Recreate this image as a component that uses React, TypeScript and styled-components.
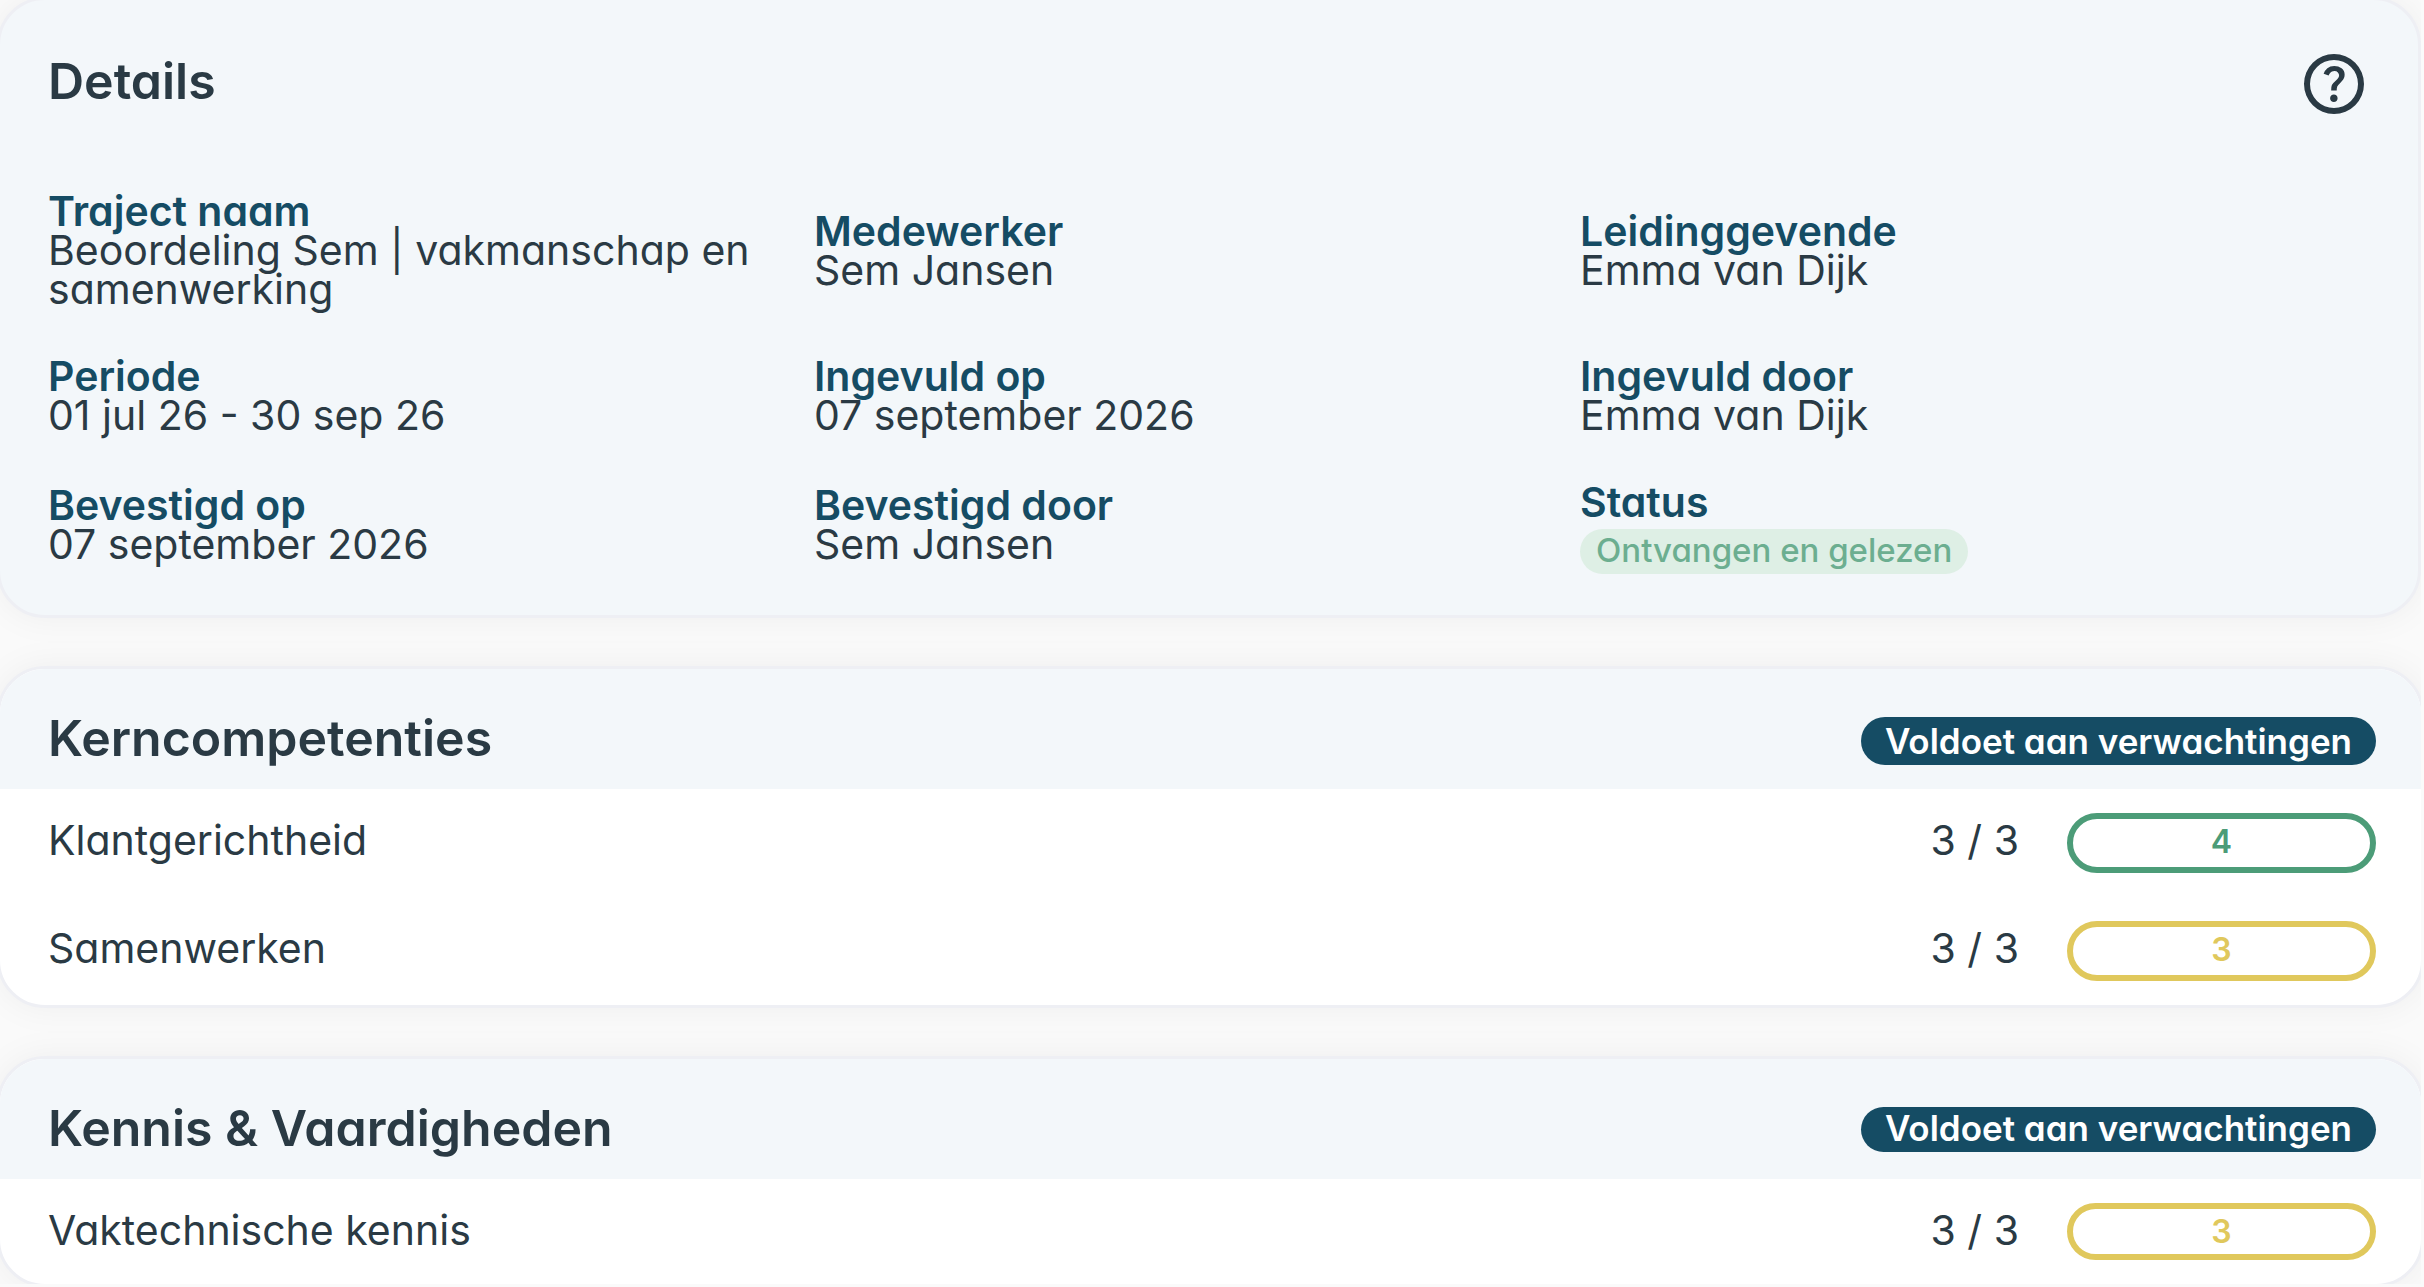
import React from "react";
import styled, { createGlobalStyle } from "styled-components";

const color = {
  page: "#fafafa",
  panel: "#f3f7fa",
  line: "#eeeff4",
  ink: "#2a3a44",
  brand: "#154c64",
  green: "#4c9c78",
  yellow: "#e0c85c",
  mint: "#deefe5",
  mintInk: "#6cae90",
};

const GlobalStyle = createGlobalStyle`
  *, *::before, *::after { box-sizing: border-box; }
  body {
    margin: 0;
    background: ${color.page};
    color: ${color.ink};
    font-family: Inter, "Open Sans", sans-serif;
    font-feature-settings: "cv11";
    font-size: 41px;
    font-weight: 400;
    line-height: 54px;
  }
`;

const Viewport = styled.div`
  overflow: hidden;
  margin-right: 3px;
`;

const Page = styled.main`
  display: flex;
  flex-direction: column;
  gap: 48px;
  margin: -3px;
`;

const Card = styled.section`
  overflow: hidden;
  border: 3px solid ${color.line};
  border-radius: 48px;
  background: #fff;
  box-shadow: 0 0 36px rgba(0, 0, 0, 0.05);
`;

const DetailsCard = styled(Card)`
  display: flex;
  flex-direction: column;
  gap: 72px;
  margin-right: 3px;
  padding: 48px;
  background: ${color.panel};
`;

const DetailsHeader = styled.header`
  display: flex;
  align-items: center;
  justify-content: space-between;
`;

const Title = styled.h2`
  margin: 0;
  padding-bottom: 6px;
  font-size: 50px;
  font-weight: 600;
  line-height: 42px;
`;

const HelpButton = styled.button`
  display: flex;
  padding: 0;
  border: 0;
  background: none;
  color: inherit;
  cursor: pointer;

  svg {
    width: 72px;
    height: 72px;
    fill: currentColor;
  }
`;

const DetailsGrid = styled.dl`
  display: grid;
  grid-template-columns: repeat(3, minmax(0, 1fr));
  gap: 48px;
  align-items: center;
  margin: 0;
  padding-right: 72px;
  line-height: 39px;
`;

const Term = styled.dt`
  color: ${color.brand};
  font-weight: 600;
`;

const Value = styled.dd`
  margin: 0;
`;

const StatusValue = styled(Value)`
  display: flex;
  margin: 7px 0 -7px;
`;

const StatusPill = styled.span`
  padding: 2px 16px 4px;
  border-radius: 24px;
  background: ${color.mint};
  color: ${color.mintInk};
  font-size: 33px;
  font-weight: 500;
`;

const GroupHeader = styled.header`
  display: flex;
  align-items: flex-start;
  justify-content: space-between;
  gap: 48px;
  height: 120px;
  padding: 48px 45px 24px 48px;
  background: ${color.panel};
`;

const Badge = styled.span<{ $compact?: boolean }>`
  padding: ${(p) => (p.$compact ? "0 24px 3px" : "3px 24px")};
  border-radius: 24px;
  background: ${color.brand};
  color: #fff;
  font-size: 35px;
  font-weight: 600;
  line-height: 42px;
`;

const Rows = styled.ul`
  margin: 0;
  padding: 0;
  list-style: none;
`;

const Row = styled.li`
  display: flex;
  align-items: flex-start;
  gap: 48px;
  padding: 24px 45px 24px 48px;
`;

const RowName = styled.span`
  flex: 1;
`;

const Rating = styled.span<{ $tone: "green" | "yellow"; $compact?: boolean }>`
  width: 309px;
  padding-bottom: ${(p) => (p.$compact ? 0 : 3)}px;
  border: 6px solid ${(p) => color[p.$tone]};
  border-radius: 30px;
  color: ${(p) => color[p.$tone]};
  font-size: 32px;
  font-weight: 600;
  line-height: 45px;
  text-align: center;
`;

const details: [string, string][] = [
  ["Traject naam", "Beoordeling Sem | vakmanschap en samenwerking"],
  ["Medewerker", "Sem Jansen"],
  ["Leidinggevende", "Emma van Dijk"],
  ["Periode", "01 jul 26 - 30 sep 26"],
  ["Ingevuld op", "07 september 2026"],
  ["Ingevuld door", "Emma van Dijk"],
  ["Bevestigd op", "07 september 2026"],
  ["Bevestigd door", "Sem Jansen"],
];

type Item = { name: string; progress: string; score: number; tone: "green" | "yellow" };
type Group = { title: string; verdict: string; compact?: boolean; items: Item[] };

const groups: Group[] = [
  {
    title: "Kerncompetenties",
    verdict: "Voldoet aan verwachtingen",
    items: [
      { name: "Klantgerichtheid", progress: "3 / 3", score: 4, tone: "green" },
      { name: "Samenwerken", progress: "3 / 3", score: 3, tone: "yellow" },
    ],
  },
  {
    title: "Kennis & Vaardigheden",
    verdict: "Voldoet aan verwachtingen",
    compact: true,
    items: [{ name: "Vaktechnische kennis", progress: "3 / 3", score: 3, tone: "yellow" }],
  },
];

const HelpIcon = () => (
  <svg viewBox="0 0 24 24" aria-hidden="true">
    <path d="M11.95 18q.525 0 .888-.363.362-.362.362-.887 0-.525-.362-.888-.363-.362-.888-.362-.525 0-.887.362-.363.363-.363.888 0 .525.363.887.362.363.887.363Zm-.9-3.85h1.85q0-.825.188-1.3.187-.475 1.062-1.3.65-.65 1.025-1.238.375-.587.375-1.412 0-1.4-1.025-2.15Q13.5 6 12.1 6q-1.425 0-2.312.75-.888.75-1.238 1.8l1.65.65q.125-.45.563-.975Q11.2 7.7 12.1 7.7q.8 0 1.2.437.4.438.4.963 0 .5-.3.937-.3.438-.75.813-1.1.975-1.35 1.475-.25.5-.25 1.825Z" />
    <path
      fillRule="evenodd"
      d="M12 2a10 10 0 1 0 0 20 10 10 0 0 0 0-20Zm0 2a8 8 0 1 1 0 16 8 8 0 0 1 0-16Z"
    />
  </svg>
);

export default function App() {
  return (
    <Viewport>
      <GlobalStyle />
      <Page>
        <DetailsCard>
          <DetailsHeader>
            <Title>Details</Title>
            <HelpButton type="button" aria-label="Help">
              <HelpIcon />
            </HelpButton>
          </DetailsHeader>
          <DetailsGrid>
            {details.map(([term, value]) => (
              <div key={term}>
                <Term>{term}</Term>
                <Value>{value}</Value>
              </div>
            ))}
            <div>
              <Term>Status</Term>
              <StatusValue>
                <StatusPill>Ontvangen en gelezen</StatusPill>
              </StatusValue>
            </div>
          </DetailsGrid>
        </DetailsCard>

        {groups.map((group) => (
          <Card key={group.title}>
            <GroupHeader>
              <Title>{group.title}</Title>
              <Badge $compact={group.compact}>{group.verdict}</Badge>
            </GroupHeader>
            <Rows>
              {group.items.map((item) => (
                <Row key={item.name}>
                  <RowName>{item.name}</RowName>
                  <span>{item.progress}</span>
                  <Rating $tone={item.tone} $compact={group.compact}>
                    {item.score}
                  </Rating>
                </Row>
              ))}
            </Rows>
          </Card>
        ))}
      </Page>
    </Viewport>
  );
}
